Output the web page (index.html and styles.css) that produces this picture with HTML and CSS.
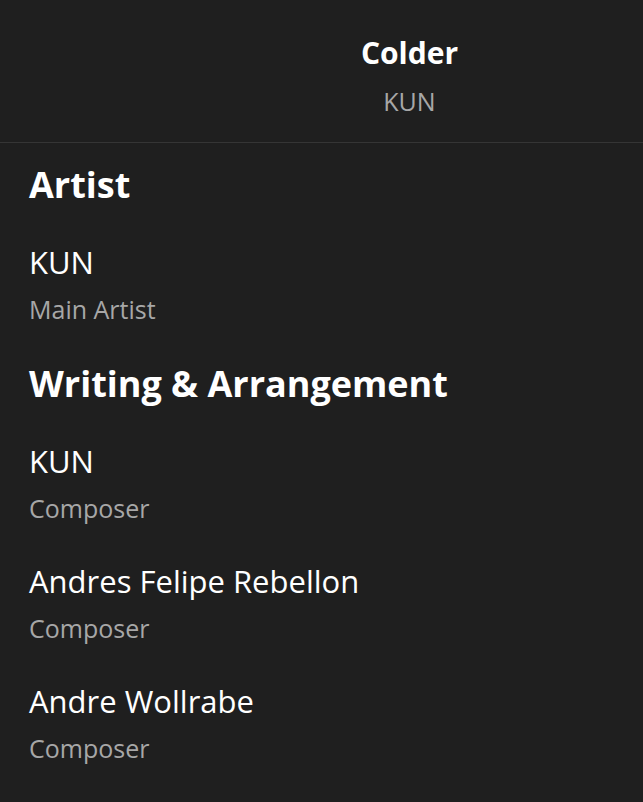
FILE: index.html
```html
<!DOCTYPE html>
<html lang="en">
<head>
  <meta charset="UTF-8" />
  <meta name="viewport" content="width=device-width, initial-scale=1" />
  <title>Credits - Colder</title>
  <link rel="stylesheet" href="styles.css" />
</head>
<body>

<header class="header">
  <div class="header-side"></div>
  <div class="header-title">
    <h1 class="track-name">Colder</h1>
    <div class="track-artist">KUN</div>
  </div>
</header>

<main class="credits">
  <section class="credit-section">
    <h2 class="section-title">Artist</h2>
    <div class="credit">
      <div class="credit-name">KUN</div>
      <div class="credit-role">Main Artist</div>
    </div>
  </section>

  <section class="credit-section">
    <h2 class="section-title">Writing &amp; Arrangement</h2>
    <div class="credit">
      <div class="credit-name">KUN</div>
      <div class="credit-role">Composer</div>
    </div>
    <div class="credit">
      <div class="credit-name">Andres Felipe Rebellon</div>
      <div class="credit-role">Composer</div>
    </div>
    <div class="credit">
      <div class="credit-name">Andre Wollrabe</div>
      <div class="credit-role">Composer</div>
    </div>
  </section>
</main>

</body>
</html>
```

FILE: styles.css
```css
* {
  box-sizing: border-box;
  margin: 0;
  padding: 0;
}

html, body {
  height: 100%;
  background: #1f1f1f;
  color: #ffffff;
  font-family: 'Open Sans', 'Liberation Sans', sans-serif;
}

/* cabecera */
.header {
  display: flex;
  padding: 35px 0 26px;
  border-bottom: 1px solid #353535;
}

.header-side {
  width: 176px;
  flex-shrink: 0;
}

.header-title {
  flex: 1;
  text-align: center;
}

.track-name {
  font-size: 30px;
  line-height: 36px;
  font-weight: 700;
}

.track-artist {
  margin-top: 15px;
  font-size: 25px;
  line-height: 30px;
  color: #a7a7a7;
}

/* lista de creditos */
.credits {
  padding: 20px 29px 0;
}

.credit-section + .credit-section {
  margin-top: 37px;
}

.section-title {
  font-size: 36px;
  line-height: 44px;
  font-weight: 700;
}

.credit {
  margin-top: 37px;
}

.credit + .credit {
  margin-top: 39px;
}

.credit-name {
  font-size: 31px;
  line-height: 36px;
}

.credit-role {
  margin-top: 13px;
  font-size: 25px;
  line-height: 32px;
  color: #a7a7a7;
}
```
